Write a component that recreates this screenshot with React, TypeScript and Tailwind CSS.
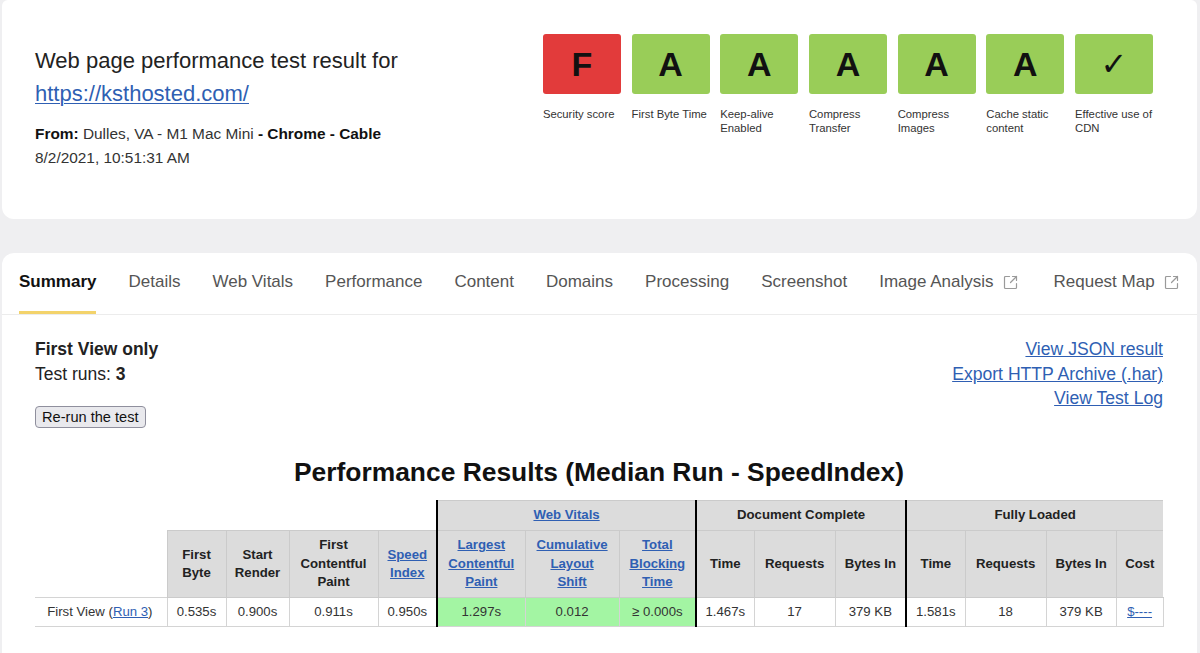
import React from "react";

interface Grade {
  mark: string;
  label: string;
  bad?: boolean;
}

const grades: Grade[] = [
  { mark: "F", label: "Security score", bad: true },
  { mark: "A", label: "First Byte Time" },
  { mark: "A", label: "Keep-alive Enabled" },
  { mark: "A", label: "Compress Transfer" },
  { mark: "A", label: "Compress Images" },
  { mark: "A", label: "Cache static content" },
  { mark: "✓", label: "Effective use of CDN" },
];

const tabs = [
  { name: "Summary", active: true },
  { name: "Details" },
  { name: "Web Vitals" },
  { name: "Performance" },
  { name: "Content" },
  { name: "Domains" },
  { name: "Processing" },
  { name: "Screenshot" },
  { name: "Image Analysis", external: true },
  { name: "Request Map", external: true },
];

const ExternalIcon = () => (
  <svg width="15" height="15" viewBox="0 0 15 15" fill="none" stroke="#9a9a9a" strokeWidth="1.2" strokeLinecap="round" strokeLinejoin="round">
    <path d="M6.5 1.5H2.5a1 1 0 0 0-1 1v10a1 1 0 0 0 1 1h10a1 1 0 0 0 1-1V8.5" />
    <path d="M9.5 1.5h4v4" />
    <path d="M13.5 1.5L7.5 7.5" />
  </svg>
);

const linkCls = "text-[#2f5fb3] underline";
const th = "border border-[#cbcbcb] bg-[#dcdcdc] font-bold text-[#222] text-center align-middle leading-[18.5px]";
const td = "border border-[#d4d4d4] text-center align-middle text-[#333]";
const thick = "border-l-2 border-l-black";
const green = "bg-[#a3f5a3]";

const App = () => {
  return (
    <div className="min-h-screen bg-[#efeff1] pl-[2px] pr-[3px] font-['Liberation_Sans',Arial,sans-serif] text-[#222]">
      {/* Header card */}
      <div className="flex h-[219px] rounded-b-xl rounded-t-md bg-white pl-[33px] pr-[44px]">
        <div className="pt-[44px]">
          <h1 className="text-[22px] leading-[33px] text-[#222]">
            Web page performance test result for
            <br />
            <a href="#" className="text-[#2f5fb3] underline decoration-1 underline-offset-2">
              https://ksthosted.com/
            </a>
          </h1>
          <div className="mt-[12px] text-[15.4px] leading-[24px] text-[#333]">
            <p>
              <b className="text-[#111]">From:</b> Dulles, VA - M1 Mac Mini <b className="text-[#111]">- Chrome - Cable</b>
            </p>
            <p>8/2/2021, 10:51:31 AM</p>
          </div>
        </div>

        <div className="ml-auto flex gap-[10.7px] pt-[34px]">
          {grades.map((g) => (
            <div key={g.label} className="w-[78px]">
              <div
                className={`flex h-[60px] items-center justify-center rounded-[3px] text-[#111] ${
                  g.bad ? "bg-[#e23b3b]" : "bg-[#99cd58]"
                } ${g.mark === "✓" ? "font-normal font-['DejaVu_Sans',sans-serif] text-[32px]" : "font-bold text-[34px]"}`}
              >
                {g.mark}
              </div>
              <p className="mt-[13px] text-[11.3px] leading-[14px] text-[#333]">{g.label}</p>
            </div>
          ))}
        </div>
      </div>

      {/* Results card */}
      <div className="mt-[34px] rounded-t-xl bg-white pb-[40px]">
        <nav className="flex gap-[32px] border-b border-[#ececec] pl-[17px]">
          {tabs.map((t) => (
            <div
              key={t.name}
              className={`flex items-center gap-[9px] border-b-[3px] pb-[19px] pt-[19px] text-[17px] leading-[20px] ${
                t.active ? "border-[#f3d36b] font-bold text-[#111]" : "border-transparent text-[#555]"
              } ${t.external ? "pr-[4px]" : ""}`}
            >
              {t.name}
              {t.external && <ExternalIcon />}
            </div>
          ))}
        </nav>

        <div className="pl-[33px] pr-[34px] pt-[22px]">
          <div className="flex justify-between">
            <div className="text-[17.5px] leading-[25px] text-[#222]">
              <p className="font-bold">First View only</p>
              <p>
                Test runs: <b>3</b>
              </p>
              <button className="mt-[19px] rounded-[4px] border border-[#8f8f9d] bg-[#e9e9ed] px-[6px] text-[14.6px] leading-[20px] text-[#111]">
                Re-run the test
              </button>
            </div>
            <div className="flex flex-col items-end text-[17.6px] leading-[24.5px]">
              <a href="#" className={linkCls}>View JSON result</a>
              <a href="#" className={linkCls}>Export HTTP Archive (.har)</a>
              <a href="#" className={linkCls}>View Test Log</a>
            </div>
          </div>

          <h2 className="mt-[26px] text-center text-[26.4px] font-bold leading-[34px] text-[#111]">
            Performance Results (Median Run - SpeedIndex)
          </h2>

          <table className="mt-[11px] w-[1128px] table-fixed border-collapse text-[13.2px]">
            <colgroup>
              {[132, 59, 63, 89, 59, 88, 94, 77, 58, 81, 71, 59, 81, 70, 47].map((w, i) => (
                <col key={i} style={{ width: w }} />
              ))}
            </colgroup>
            <thead>
              <tr className="h-[30px]">
                <th colSpan={5} className="border-0"></th>
                <th colSpan={3} className={`${th} ${thick}`}>
                  <a href="#" className={linkCls}>Web Vitals</a>
                </th>
                <th colSpan={3} className={`${th} ${thick}`}>Document Complete</th>
                <th colSpan={4} className={`${th} ${thick} border-r-0`}>Fully Loaded</th>
              </tr>
              <tr className="h-[67px]">
                <th className="border-0"></th>
                <th className={th}>First<br />Byte</th>
                <th className={th}>Start<br />Render</th>
                <th className={th}>First<br />Contentful<br />Paint</th>
                <th className={th}>
                  <a href="#" className={linkCls}>Speed<br />Index</a>
                </th>
                <th className={`${th} ${thick}`}>
                  <a href="#" className={linkCls}>Largest<br />Contentful<br />Paint</a>
                </th>
                <th className={th}>
                  <a href="#" className={linkCls}>Cumulative<br />Layout<br />Shift</a>
                </th>
                <th className={th}>
                  <a href="#" className={linkCls}>Total<br />Blocking<br />Time</a>
                </th>
                <th className={`${th} ${thick}`}>Time</th>
                <th className={th}>Requests</th>
                <th className={th}>Bytes In</th>
                <th className={`${th} ${thick}`}>Time</th>
                <th className={th}>Requests</th>
                <th className={th}>Bytes In</th>
                <th className={`${th} border-r-0`}>Cost</th>
              </tr>
            </thead>
            <tbody>
              <tr className="h-[29px]">
                <td className="border-y border-[#d4d4d4] pr-[14px] text-right text-[#333]">
                  First View (<a href="#" className={linkCls}>Run 3</a>)
                </td>
                <td className={td}>0.535s</td>
                <td className={td}>0.900s</td>
                <td className={td}>0.911s</td>
                <td className={td}>0.950s</td>
                <td className={`${td} ${thick} ${green}`}>1.297s</td>
                <td className={`${td} ${green}`}>0.012</td>
                <td className={`${td} ${green}`}>≥ 0.000s</td>
                <td className={`${td} ${thick}`}>1.467s</td>
                <td className={td}>17</td>
                <td className={td}>379 KB</td>
                <td className={`${td} ${thick}`}>1.581s</td>
                <td className={td}>18</td>
                <td className={td}>379 KB</td>
                <td className={td}>
                  <a href="#" className={linkCls}>$----</a>
                </td>
              </tr>
            </tbody>
          </table>
        </div>
      </div>
    </div>
  );
};

export default App;
